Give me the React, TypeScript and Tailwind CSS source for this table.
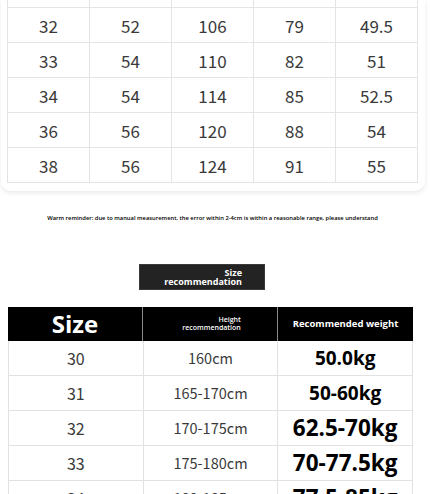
import React from "react";

const top = [
  ["32", "52", "106", "79", "49.5"],
  ["33", "54", "110", "82", "51"],
  ["34", "54", "114", "85", "52.5"],
  ["36", "56", "120", "88", "54"],
  ["38", "56", "124", "91", "55"],
];

const bottom: { s: string; h: string; w: string; cls: string }[] = [
  { s: "30", h: "160cm", w: "50.0kg", cls: "text-[19px]" },
  { s: "31", h: "165-170cm", w: "50-60kg", cls: "text-[19px]" },
  { s: "32", h: "170-175cm", w: "62.5-70kg", cls: "text-[22.5px]" },
  { s: "33", h: "175-180cm", w: "70-77.5kg", cls: "text-[22.5px]" },
  { s: "34", h: "180-185cm", w: "77.5-85kg", cls: "text-[22.5px]" },
];

export default function App() {
  return (
    <div className="w-[430px] h-[494px] overflow-hidden bg-white">
      {/* top card */}
      <div className="ml-[1px] w-[424px] bg-white rounded-b-[10px] shadow-[0_2px_5px_rgba(0,0,0,0.09)] pb-[8px]">
        <div className="ml-[6px] w-[411px] border-l border-[#e4e4e4] font-['Noto_Sans_CJK_SC','Noto_Sans',sans-serif] text-[#3a3a3a]">
          <div className="grid grid-cols-5 h-[8px]">
            {[0, 1, 2, 3, 4].map((i) => (
              <div key={i} className="border-r border-b border-[#e4e4e4]" />
            ))}
          </div>
          {top.map((r, ri) => (
            <div key={ri} className="grid grid-cols-5 h-[35px]">
              {r.map((c, ci) => (
                <div
                  key={ci}
                  className="border-r border-b border-[#e4e4e4] flex items-center justify-center text-[17px] leading-none"
                >
                  {c}
                </div>
              ))}
            </div>
          ))}
        </div>
      </div>

      {/* reminder */}
      <div className="mt-[23px] w-[425px] h-[8px] leading-[8px] text-center text-[5.8px] font-semibold text-black font-['Open_Sans',sans-serif] whitespace-nowrap">
        Warm reminder: due to manual measurement, the error within 2-4cm is within a reasonable range, please understand
      </div>

      {/* size recommendation label */}
      <div className="mt-[42px] ml-[139px] w-[126px] h-[26px] bg-[#232323] border border-[#3a3a3a] flex items-center justify-end pr-[22px]">
        <div className="text-right text-white font-bold text-[9px] leading-[9px] font-['Open_Sans',sans-serif]">
          <div>Size</div>
          <div>recommendation</div>
        </div>
      </div>

      {/* bottom table */}
      <div className="mt-[17px] ml-[8px] w-[405px] font-['Open_Sans',sans-serif]">
        <div className="grid grid-cols-3 h-[34px] bg-black text-white">
          <div className="flex items-center justify-center border-r border-[#888] text-[24px] font-bold leading-none">
            Size
          </div>
          <div className="flex items-center justify-center border-r border-[#888]">
            <div className="text-right font-semibold text-[7px] leading-[8px] ml-[3px]">
              <div>Height</div>
              <div>recommendation</div>
            </div>
          </div>
          <div className="flex items-center justify-center text-[9.5px] font-bold leading-none">
            Recommended weight
          </div>
        </div>
        <div className="border-l border-[#e2e2e2]">
          {bottom.map((r, i) => (
            <div key={i} className="grid grid-cols-3 h-[35px]">
              <div className="border-r border-b border-[#e2e2e2] flex items-center justify-center text-[16px] text-[#3a3a3a] leading-none font-['Noto_Sans_CJK_SC','Noto_Sans',sans-serif]">
                {r.s}
              </div>
              <div className="border-r border-b border-[#e2e2e2] flex items-center justify-center text-[14.5px] text-[#3a3a3a] leading-none font-['Noto_Sans_CJK_SC','Noto_Sans',sans-serif]">
                {r.h}
              </div>
              <div
                className={
                  "border-r border-b border-[#e2e2e2] flex items-center justify-center font-bold text-black leading-none " +
                  r.cls
                }
              >
                {r.w}
              </div>
            </div>
          ))}
        </div>
      </div>
    </div>
  );
}
